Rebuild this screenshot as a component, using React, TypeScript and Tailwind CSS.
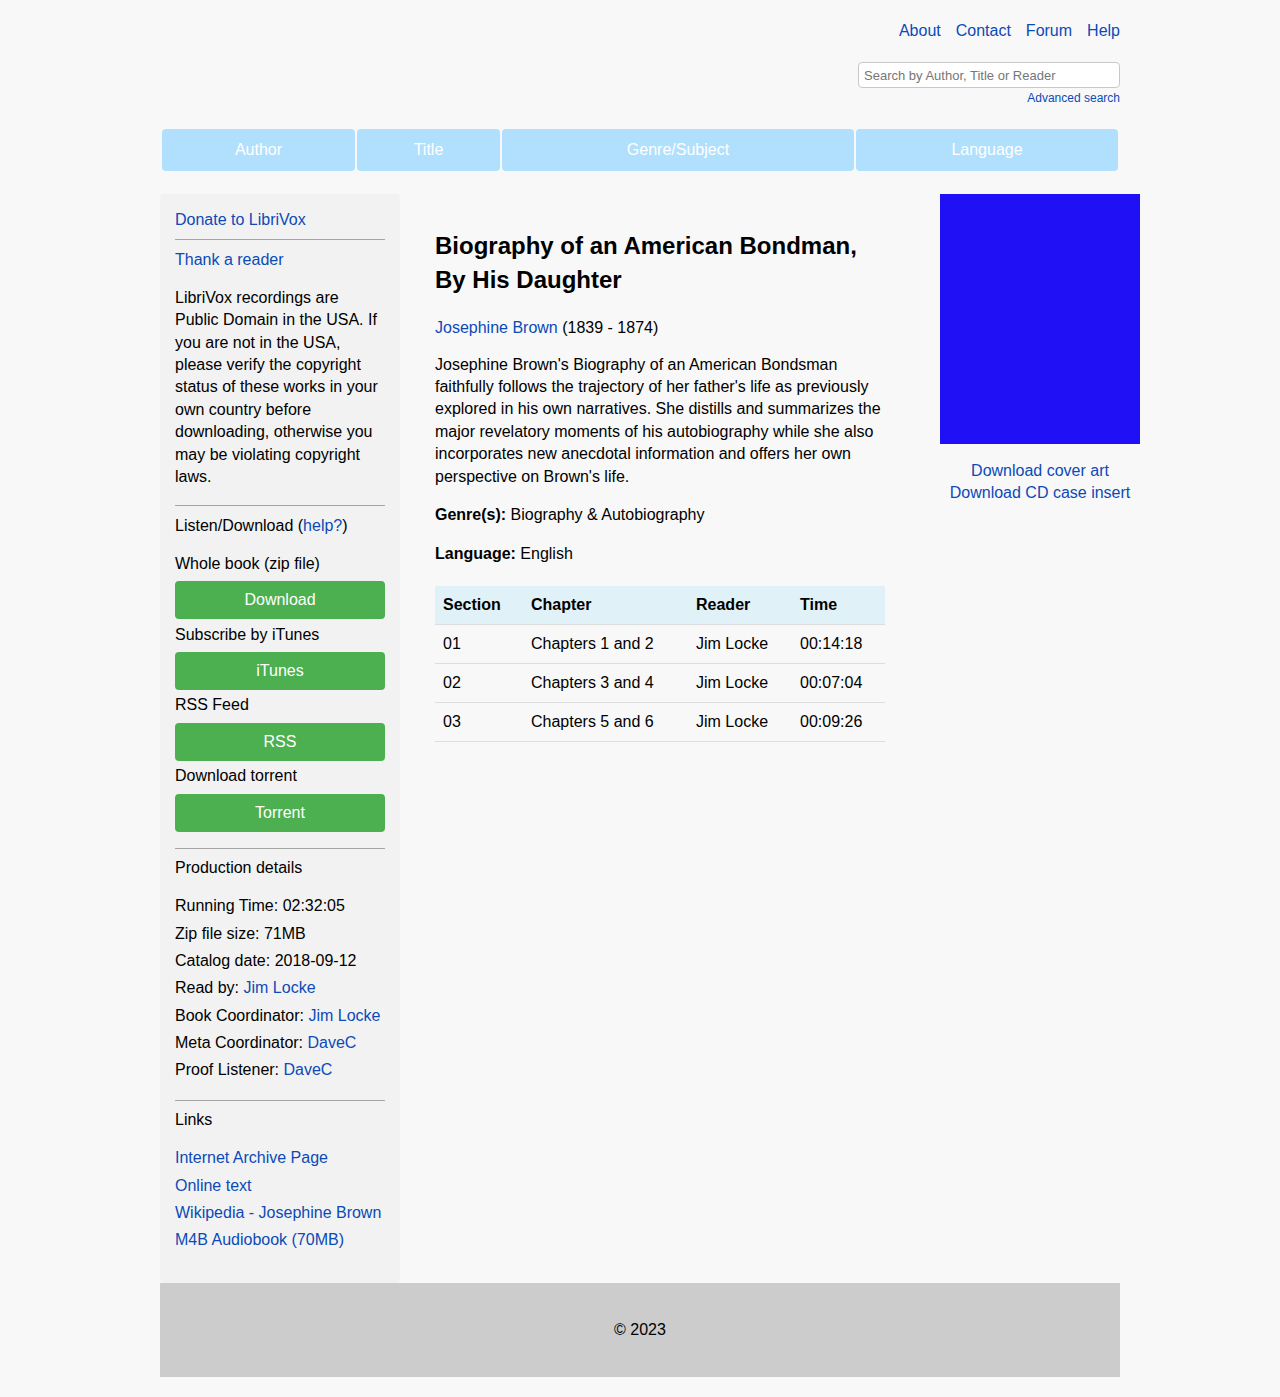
const font = { fontFamily: '"Liberation Sans", Arial, sans-serif' };

const tabs = [
  { label: "Author", w: "w-[193px]" },
  { label: "Title", w: "w-[143px]" },
  { label: "Genre/Subject", w: "w-[352px]" },
  { label: "Language", w: "w-[262px]" },
];

const chapters = [
  { section: "01", chapter: "Chapters 1 and 2", reader: "Jim Locke", time: "00:14:18" },
  { section: "02", chapter: "Chapters 3 and 4", reader: "Jim Locke", time: "00:07:04" },
  { section: "03", chapter: "Chapters 5 and 6", reader: "Jim Locke", time: "00:09:26" },
];

const downloads = [
  { label: "Whole book (zip file)", btn: "Download" },
  { label: "Subscribe by iTunes", btn: "iTunes" },
  { label: "RSS Feed", btn: "RSS" },
  { label: "Download torrent", btn: "Torrent" },
];

const details: { k: string; v: string; link?: boolean }[] = [
  { k: "Running Time:", v: "02:32:05" },
  { k: "Zip file size:", v: "71MB" },
  { k: "Catalog date:", v: "2018-09-12" },
  { k: "Read by:", v: "Jim Locke", link: true },
  { k: "Book Coordinator:", v: "Jim Locke", link: true },
  { k: "Meta Coordinator:", v: "DaveC", link: true },
  { k: "Proof Listener:", v: "DaveC", link: true },
];

const links = ["Internet Archive Page", "Online text", "Wikipedia - Josephine Brown", "M4B Audiobook (70MB)"];

const A = ({ children, className = "" }: { children: React.ReactNode; className?: string }) => (
  <a href="#" className={`text-[#0b4ab8] no-underline ${className}`}>
    {children}
  </a>
);

function Sidebar() {
  return (
    <aside className="w-[240px] shrink-0 bg-[#f2f2f2] rounded-[4px] px-[15px] pt-[15px] pb-[31px] text-[16px] leading-[1.4] text-black">
      <A>Donate to LibriVox</A>
      <div className="border-t border-[#a5a5a5] mt-[8px] mb-[9px]" />
      <A>Thank a reader</A>
      <p className="mt-[15px]">
        LibriVox recordings are Public Domain in the USA. If you are not in the USA, please verify the copyright
        status of these works in your own country before downloading, otherwise you may be violating copyright
        laws.
      </p>
      <div className="border-t border-[#a5a5a5] mt-[17px] mb-[9px]" />
      <p>
        Listen/Download (<A>help?</A>)
      </p>
      <div className="mt-[15px]">
        {downloads.map((d) => (
          <div key={d.btn}>
            <p className="mb-[6px]">{d.label}</p>
            <a
              href="#"
              className="flex h-[38px] mb-[4.5px] items-center justify-center rounded-[4px] bg-[#4caf50] text-white"
            >
              {d.btn}
            </a>
          </div>
        ))}
      </div>
      <div className="border-t border-[#a5a5a5] mt-[16px] mb-[8px]" />
      <p>Production details</p>
      <div className="mt-[16px] flex flex-col gap-[5px]">
        {details.map((d) => (
          <p key={d.k}>
            {d.k} {d.link ? <A>{d.v}</A> : d.v}
          </p>
        ))}
      </div>
      <div className="border-t border-[#a5a5a5] mt-[18px] mb-[8px]" />
      <p>Links</p>
      <div className="mt-[16px] flex flex-col gap-[5px]">
        {links.map((l) => (
          <p key={l}>
            <A>{l}</A>
          </p>
        ))}
      </div>
    </aside>
  );
}

function Content() {
  return (
    <main className="w-[450px] shrink-0 ml-[35px] pt-[35px] text-[16px] leading-[1.4] text-black">
      <h1 className="text-[24px] font-bold leading-[1.4]">Biography of an American Bondman, By His Daughter</h1>
      <p className="mt-[21px]">
        <A>Josephine Brown</A> (1839 - 1874)
      </p>
      <p className="mt-[14px]">
        Josephine Brown's Biography of an American Bondsman faithfully follows the trajectory of her father's life
        as previously explored in his own narratives. She distills and summarizes the major revelatory moments of his
        autobiography while she also incorporates new anecdotal information and offers her own perspective on
        Brown's life.
      </p>
      <p className="mt-[16px]">
        <span className="font-bold">Genre(s):</span> Biography &amp; Autobiography
      </p>
      <p className="mt-[17px]">
        <span className="font-bold">Language:</span> English
      </p>
      <table className="mt-[20px] w-full border-collapse text-left leading-[22px]">
        <thead>
          <tr className="bg-[#e1f1f8]">
            <th className="w-[88px] px-[8px] py-[8px] font-bold border-b border-[#ddd]">Section</th>
            <th className="w-[165px] px-[8px] py-[8px] font-bold border-b border-[#ddd]">Chapter</th>
            <th className="w-[104px] px-[8px] py-[8px] font-bold border-b border-[#ddd]">Reader</th>
            <th className="px-[8px] py-[8px] font-bold border-b border-[#ddd]">Time</th>
          </tr>
        </thead>
        <tbody>
          {chapters.map((c) => (
            <tr key={c.section}>
              <td className="px-[8px] py-[8px] border-b border-[#ddd]">{c.section}</td>
              <td className="px-[8px] py-[8px] border-b border-[#ddd]">{c.chapter}</td>
              <td className="px-[8px] py-[8px] border-b border-[#ddd]">{c.reader}</td>
              <td className="px-[8px] py-[8px] border-b border-[#ddd]">{c.time}</td>
            </tr>
          ))}
        </tbody>
      </table>
    </main>
  );
}

function CoverColumn() {
  return (
    <div className="w-[200px] shrink-0 ml-[55px] text-[16px] leading-[22px] text-center">
      <div className="h-[250px] w-[200px] bg-[#2010f5]" />
      <div className="mt-[16px] flex flex-col">
        <A>Download cover art</A>
        <A>Download CD case insert</A>
      </div>
    </div>
  );
}

export default function App() {
  return (
    <div className="min-h-[1397px] bg-[#f8f8f8]" style={font}>
      <div className="w-[960px] mx-auto pb-[20px]">
        <header className="flex flex-col items-end pt-[20px]">
          <nav className="flex gap-[15px] text-[16px] leading-[22px]">
            <A>About</A>
            <A>Contact</A>
            <A>Forum</A>
            <A>Help</A>
          </nav>
          <input
            type="text"
            placeholder="Search by Author, Title or Reader"
            className="mt-[20px] w-[262px] h-[26px] rounded-[4px] border border-[#c8c8c8] bg-white px-[5px] text-[13px] text-black placeholder:text-[#767676] outline-none"
          />
          <A className="text-[12px] leading-[16px] mt-[2px]">Advanced search</A>
        </header>
        <div className="mt-[23px] flex gap-[2px] px-[2px]">
          {tabs.map((t) => (
            <a
              key={t.label}
              href="#"
              className={`${t.w} h-[42px] flex items-center justify-center rounded-[4px] bg-[#b0e0fe] text-white text-[16px]`}
            >
              {t.label}
            </a>
          ))}
        </div>
        <div className="mt-[23px] flex items-start">
          <Sidebar />
          <Content />
          <CoverColumn />
        </div>
        <footer className="h-[94px] flex items-center justify-center bg-[#cccccc] text-[16px] text-black">
          © 2023
        </footer>
      </div>
    </div>
  );
}
